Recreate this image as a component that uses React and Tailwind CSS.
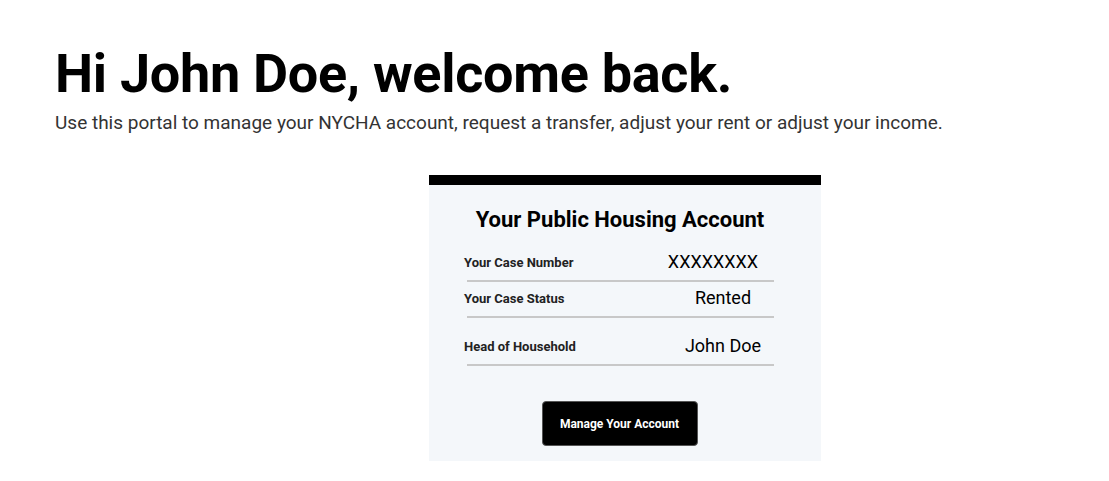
import React from 'react';

const rows = [
  { label: 'Your Case Number', value: 'XXXXXXXX', row: 'h-[36px]', val: 'pr-[12px]' },
  { label: 'Your Case Status', value: 'Rented', row: 'h-[36px]', val: 'pl-[8px]' },
  { label: 'Head of Household', value: 'John Doe', row: 'h-[48px] pt-[12px]', val: 'pl-[8px]' },
];

const App = () => {
  return (
    <div className="min-h-screen bg-white text-black font-['Roboto',sans-serif] px-[55px] pt-[42px]">
      <h1 className="text-[54px] leading-[64px] font-bold tracking-[-0.3px]">Hi John Doe, welcome back.</h1>
      <p className="text-[19px] leading-[23px] text-[#333333] mt-[5px]">
        Use this portal to manage your NYCHA account, request a transfer, adjust your rent or adjust your income.
      </p>

      <div className="ml-[374px] mt-[41px] w-[392px] bg-[#f4f7fa] border-t-[10px] border-black pb-[15px]">
        <h2 className="text-center text-[22px] leading-[26px] font-bold pt-[22px] pr-[10px]">Your Public Housing Account</h2>
        <div className="mt-[13px] ml-[35px] w-[310px]">
          {rows.map((r) => (
            <div key={r.label} className={`${r.row} flex items-center border-b-2 border-[#c8c8c8] ml-[3px]`}>
              <span className="-ml-[3px] text-[13px] font-bold text-[#222222] flex-1">{r.label}</span>
              <span className={`${r.val} w-[110px] text-center text-[18px] text-black -mt-[3px]`}>{r.value}</span>
            </div>
          ))}
        </div>
        <div className="flex justify-center mt-[35px] pr-[11px]">
          <button className="w-[156px] h-[45px] bg-black text-white text-[12px] font-bold rounded-[4px] border border-[#555555]">
            Manage Your Account
          </button>
        </div>
      </div>
    </div>
  );
};

export default App;
